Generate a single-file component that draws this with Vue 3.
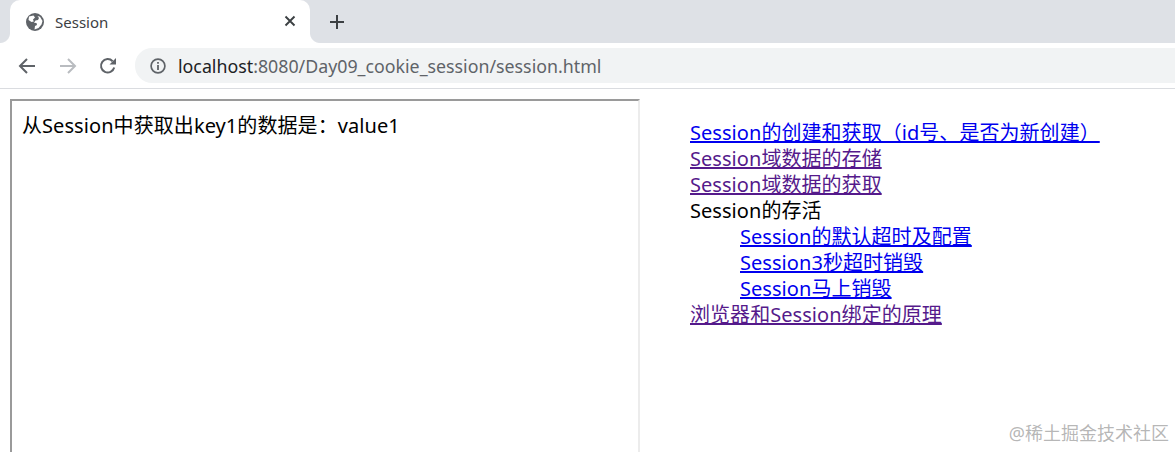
<template>
  <div class="window">
    <div class="tab-strip">
      <div class="tab">
        <svg class="globe" width="18" height="18" viewBox="0 0 18 18">
          <circle cx="9" cy="9" r="9" fill="#5f6368" />
          <path d="M3 3.5 L7.5 2.5 L9 4.5 L7 6.5 L7.8 8.5 L5.5 9 L2.5 7 Z M8.5 16.5 L9 13 L11 12 L10.5 10 L8 9.8 L9.5 7.5 L12 7 L13 5 L11.5 3 L14 3.8 L16.5 8 L15.5 11.5 L12.5 15 Z" fill="#fff" />
        </svg>
        <span class="tab-title">Session</span>
        <svg class="tab-close" width="12" height="12" viewBox="0 0 12 12">
          <path d="M1.5 1.5 L10.5 10.5 M10.5 1.5 L1.5 10.5" stroke="#3c4043" stroke-width="1.9" />
        </svg>
      </div>
      <svg class="new-tab" width="14" height="14" viewBox="0 0 14 14">
        <path d="M7 0 V14 M0 7 H14" stroke="#3c4043" stroke-width="2" />
      </svg>
    </div>
    <div class="toolbar">
      <svg class="nav" width="18" height="18" viewBox="0 0 18 18">
        <path d="M17 9 H2.5 M9 2 L2 9 L9 16" fill="none" stroke="#5f6368" stroke-width="2" />
      </svg>
      <svg class="nav" width="18" height="18" viewBox="0 0 18 18">
        <path d="M1 9 H15.5 M9 2 L16 9 L9 16" fill="none" stroke="#b9bcc0" stroke-width="2" />
      </svg>
      <svg class="nav" width="18" height="18" viewBox="0 0 18 18">
        <path d="M15.2 10.5 A6.7 6.7 0 1 1 13.6 4.2" fill="none" stroke="#5f6368" stroke-width="2" />
        <path d="M10.5 7.5 H17 V1 Z" fill="#5f6368" />
      </svg>
      <div class="omnibox">
        <svg width="16" height="16" viewBox="0 0 16 16">
          <circle cx="8" cy="8" r="6.9" fill="none" stroke="#5f6368" stroke-width="1.7" />
          <path d="M8 7 V12 M8 4 V5.8" stroke="#5f6368" stroke-width="1.8" />
        </svg>
        <span class="url"><span class="host">localhost</span>:8080/Day09_cookie_session/session.html</span>
      </div>
    </div>
    <div class="page">
      <div class="frame">从Session中获取出key1的数据是：value1</div>
      <ul class="menu">
        <li v-for="item in links" :key="item.text" :class="{ sub: item.sub }">
          <a v-if="item.state" href="#" :class="item.state" @click.prevent>{{ item.text }}</a>
          <span v-else>{{ item.text }}</span>
        </li>
      </ul>
    </div>
    <div class="watermark">@稀土掘金技术社区</div>
  </div>
</template>

<script setup>
const links = [
  { text: 'Session的创建和获取（id号、是否为新创建）', state: 'fresh' },
  { text: 'Session域数据的存储', state: 'visited' },
  { text: 'Session域数据的获取', state: 'visited' },
  { text: 'Session的存活' },
  { text: 'Session的默认超时及配置', state: 'fresh', sub: true },
  { text: 'Session3秒超时销毁', state: 'fresh', sub: true },
  { text: 'Session马上销毁', state: 'fresh', sub: true },
  { text: '浏览器和Session绑定的原理', state: 'visited' },
]
</script>

<style>
html,
body {
  margin: 0;
  background: #fff;
  overflow: hidden;
}
</style>

<style scoped>
.window {
  position: relative;
  width: 1175px;
  height: 452px;
  overflow: hidden;
  background: #fff;
  color: #000;
  font-family: 'Noto Sans', 'Noto Sans CJK SC', sans-serif;
}

.tab-strip {
  display: flex;
  align-items: flex-end;
  height: 43px;
  background: #dee1e6;
}

.tab {
  position: relative;
  display: flex;
  align-items: center;
  box-sizing: border-box;
  width: 300px;
  height: 43px;
  margin-left: 10px;
  padding: 0 14px 0 16px;
  background: #fff;
  border-radius: 10px 10px 0 0;
}

/* curved feet of the active tab */
.tab::before,
.tab::after {
  content: '';
  position: absolute;
  bottom: 0;
  width: 10px;
  height: 10px;
}

.tab::before {
  left: -10px;
  background: radial-gradient(circle at 0 0, #dee1e6 9.5px, #fff 10.5px);
}

.tab::after {
  right: -10px;
  background: radial-gradient(circle at 100% 0, #dee1e6 9.5px, #fff 10.5px);
}

.tab-title {
  flex: 1;
  margin-left: 11px;
  font-size: 15px;
  color: #3c4043;
}

.tab-close {
  margin-bottom: 2px;
}

.new-tab {
  align-self: center;
  margin-left: 20px;
}

.toolbar {
  display: flex;
  align-items: center;
  gap: 22.5px;
  box-sizing: border-box;
  height: 46px;
  padding: 0 0 0 18px;
  border-bottom: 1px solid #dadce0;
}

.nav {
  flex: none;
}

.omnibox {
  display: flex;
  align-items: center;
  gap: 12px;
  flex: 1;
  height: 35px;
  margin-left: -4.5px;
  padding-left: 15px;
  background: #f1f3f4;
  border-radius: 17px 0 0 17px;
}

.url {
  font-size: 17.8px;
  color: #5f6368;
}

.host {
  color: #202124;
}

.page {
  display: flex;
  align-items: flex-start;
  padding: 10px 0 0 10px;
}

.frame {
  flex: none;
  box-sizing: border-box;
  width: 630px;
  height: 400px;
  padding: 12px 10px;
  border: 2px solid;
  border-color: #9a9a9a #ececec #ececec #9a9a9a;
  font-size: 20px;
  line-height: 26px;
  letter-spacing: 0.07px;
}

.menu {
  margin: 21px 0 0 50px;
  padding: 0;
  list-style: none;
  font-size: 20px;
  line-height: 26px;
  letter-spacing: 0.05px;
  white-space: nowrap;
}

.sub {
  padding-left: 50px;
}

.fresh {
  color: #0000ee;
}

.visited {
  color: #551a8b;
}

.watermark {
  position: absolute;
  right: 6px;
  bottom: 7px;
  font-size: 18px;
  line-height: 24px;
  color: rgba(120, 120, 120, 0.55);
}
</style>
